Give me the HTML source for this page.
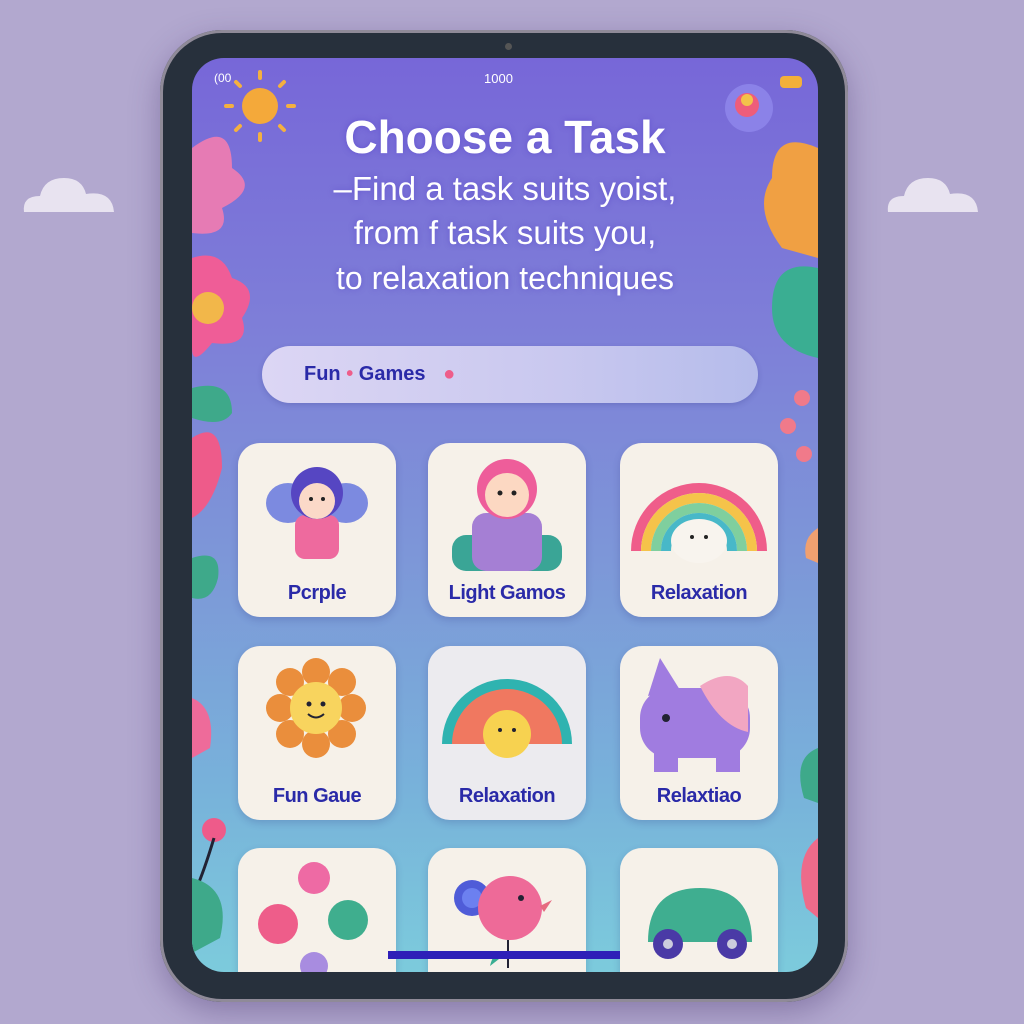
<!DOCTYPE html>
<html><head><meta charset="utf-8"><style>
*{margin:0;padding:0;box-sizing:border-box}
body{width:1024px;height:1024px;background:#b2a8cf;position:relative;overflow:hidden;font-family:"Liberation Sans",sans-serif}
.abs{position:absolute}
.dev{left:160px;top:30px;width:688px;height:972px;border-radius:62px;background:#27303c;box-shadow:0 0 0 3px #8f8a98 inset,0 10px 30px rgba(60,40,100,.35)}
.scr{left:192px;top:58px;width:626px;height:914px;border-radius:32px;overflow:hidden;background:linear-gradient(180deg,#7767d8 0%,#7e7fd8 30%,#7d97d8 55%,#78b2da 80%,#7ccbdc 100%)}
.t{color:#fff;text-align:center;width:100%;left:0;text-shadow:0 0 6px rgba(80,60,200,.5)}
.card{width:158px;height:174px;border-radius:22px;background:#f6f1e9;box-shadow:0 3px 8px rgba(40,40,120,.2)}
.lab{position:absolute;bottom:12px;width:100%;text-align:center;color:#2a2aa8;font-weight:bold;font-size:20px;letter-spacing:-.5px}
</style></head><body>
<svg class="abs" style="left:20px;top:160px" width="100" height="56"><path d="M4 52 Q2 36 20 36 Q24 18 44 18 Q62 18 66 34 Q92 30 94 52 Z" fill="#e8e3f0"/></svg>
<svg class="abs" style="left:884px;top:160px" width="100" height="56"><path d="M4 52 Q2 36 20 36 Q24 18 44 18 Q62 18 66 34 Q92 30 94 52 Z" fill="#e8e3f0"/></svg>
<div class="abs dev"></div>
<div class="abs" style="left:505px;top:43px;width:7px;height:7px;border-radius:50%;background:#555"></div>
<div class="abs scr">
<svg class="abs" style="left:0;top:0" width="626" height="914">
<!-- sun -->
<g transform="translate(68,48)"><circle r="18" fill="#f4a93a"/><g stroke="#f4b040" stroke-width="4" stroke-linecap="round"><path d="M0-28v-6M0 28v6M-28 0h-6M28 0h6M-20-20l-4-4M20-20l4-4M-20 20l-4 4M20 20l4 4"/></g></g>
<!-- left florals -->
<path d="M0 90 Q40 60 40 110 Q70 130 30 150 Q40 180 0 175Z" fill="#e67bb4"/>
<path d="M0 200 Q30 190 40 220 Q70 230 50 260 Q60 290 20 285 Q0 310 0 290Z" fill="#ef5d97"/>
<circle cx="16" cy="250" r="16" fill="#f2b74a"/>
<path d="M0 330 Q40 320 40 355 Q30 370 0 360Z" fill="#3ea98a"/>
<path d="M0 380 Q30 360 30 410 Q20 450 0 460Z" fill="#ee5b8a"/>
<path d="M0 500 Q30 490 26 520 Q20 545 0 540Z" fill="#3ea98a"/>
<path d="M0 640 Q24 650 18 690 L0 700Z" fill="#ee6b9a"/>
<circle cx="22" cy="772" r="12" fill="#ee5b8a"/>
<path d="M22 780 Q10 820 0 840" stroke="#223" stroke-width="3" fill="none"/>
<path d="M0 820 Q40 830 28 880 L0 895Z" fill="#3ea98a"/>
<!-- right florals -->
<path d="M626 90 Q580 70 580 120 Q560 150 590 190 L626 200Z" fill="#f0a043"/>
<path d="M626 210 Q580 200 580 250 Q580 290 626 300Z" fill="#3aae92"/>
<circle cx="610" cy="340" r="8" fill="#f07a8a"/><circle cx="596" cy="368" r="8" fill="#f07a8a"/><circle cx="612" cy="396" r="8" fill="#f07a8a"/>
<path d="M626 470 Q610 480 614 500 L626 505Z" fill="#f0a070"/>
<path d="M626 690 Q600 700 612 740 L626 745Z" fill="#3ea98a"/>
<path d="M626 780 Q600 800 614 850 L626 860Z" fill="#ee6b8a"/>
<!-- top right avatar -->
<circle cx="557" cy="50" r="24" fill="#8b82e8"/><circle cx="555" cy="47" r="12" fill="#ee5d7a"/><circle cx="555" cy="42" r="6" fill="#f3c24a"/>
<rect x="588" y="18" width="22" height="12" rx="4" fill="#f3b03a"/>
<!-- bottom bar -->
<rect x="196" y="893" width="232" height="8" fill="#2e1fb8"/>
</svg>
<div class="abs" style="left:22px;top:13px;color:#fff;font-size:12px">(00</div>
<div class="abs" style="left:292px;top:13px;color:#fff;font-size:13px">1000</div>
<div class="abs t" style="top:52px;font-size:46px;font-weight:bold">Choose a Task</div>
<div class="abs t" style="top:112px;font-size:33px">–Find a task suits yoist,</div>
<div class="abs t" style="top:156px;font-size:33px">from f task suits you,</div>
<div class="abs t" style="top:202px;font-size:32px">to relaxation techniques</div>
<div class="abs" style="left:70px;top:288px;width:496px;height:57px;border-radius:29px;background:linear-gradient(90deg,#dcd6f4,#c9c8ef 60%,#b5bceb);box-shadow:0 2px 6px rgba(40,40,120,.2)">
<span style="position:absolute;left:42px;top:17px;font-size:20px;font-weight:bold;color:#2a2aa8">Fun <span style="color:#ee5d8a">•</span> Games <span style="color:#ee5d8a;margin-left:12px">●</span></span></div>
<!-- cards -->
<div class="abs card" style="left:46px;top:385px"><svg width="158" height="130"><ellipse cx="50" cy="60" rx="22" ry="20" fill="#7c8ae0"/><ellipse cx="108" cy="60" rx="22" ry="20" fill="#7c8ae0"/><rect x="57" y="72" width="44" height="44" rx="10" fill="#ee6a9e"/><circle cx="79" cy="50" r="26" fill="#5646c2"/><circle cx="79" cy="58" r="18" fill="#fbd9c8"/><circle cx="73" cy="56" r="2" fill="#222"/><circle cx="85" cy="56" r="2" fill="#222"/></svg><div class="lab">Pcrple</div></div>
<div class="abs card" style="left:236px;top:385px"><svg width="158" height="130"><rect x="24" y="92" width="110" height="36" rx="14" fill="#3aa596"/><rect x="44" y="70" width="70" height="58" rx="14" fill="#a57fd4"/><circle cx="79" cy="46" r="30" fill="#ee5d9a"/><circle cx="79" cy="52" r="22" fill="#fcd8c2"/><circle cx="72" cy="50" r="2.5" fill="#222"/><circle cx="86" cy="50" r="2.5" fill="#222"/></svg><div class="lab">Light Gamos</div></div>
<div class="abs card" style="left:428px;top:385px"><svg width="158" height="130"><g fill="none" stroke-width="10"><path d="M16 108 A63 63 0 0 1 142 108" stroke="#ef5d8a"/><path d="M26 108 A53 53 0 0 1 132 108" stroke="#f5c34a"/><path d="M36 108 A43 43 0 0 1 122 108" stroke="#7fcf9e"/><path d="M46 108 A33 33 0 0 1 112 108" stroke="#48b8c8"/></g><ellipse cx="79" cy="98" rx="28" ry="22" fill="#f8f4ee"/><circle cx="72" cy="94" r="2" fill="#222"/><circle cx="86" cy="94" r="2" fill="#222"/></svg><div class="lab">Relaxation</div></div>
<div class="abs card" style="left:46px;top:588px"><svg width="158" height="130"><g fill="#ea8e3c" transform="translate(78,62)"><circle cx="0" cy="-36" r="14"/><circle cx="0" cy="36" r="14"/><circle cx="-36" cy="0" r="14"/><circle cx="36" cy="0" r="14"/><circle cx="-26" cy="-26" r="14"/><circle cx="26" cy="26" r="14"/><circle cx="-26" cy="26" r="14"/><circle cx="26" cy="-26" r="14"/></g><circle cx="78" cy="62" r="26" fill="#f8d45e"/><circle cx="71" cy="58" r="2.5" fill="#223"/><circle cx="85" cy="58" r="2.5" fill="#223"/><path d="M70 68 Q78 75 86 68" stroke="#223" stroke-width="2" fill="none"/></svg><div class="lab">Fun Gaue</div></div>
<div class="abs card" style="left:236px;top:588px;background:#ecebef"><svg width="158" height="130"><path d="M14 98 A65 65 0 0 1 144 98 Z" fill="#2fb3b0"/><path d="M24 98 A55 55 0 0 1 134 98 Z" fill="#f07860"/><circle cx="79" cy="88" r="24" fill="#f7d250"/><circle cx="72" cy="84" r="2" fill="#223"/><circle cx="86" cy="84" r="2" fill="#223"/></svg><div class="lab">Relaxation</div></div>
<div class="abs card" style="left:428px;top:588px"><svg width="158" height="130"><rect x="20" y="42" width="110" height="70" rx="30" fill="#a07ce0"/><rect x="34" y="90" width="24" height="36" fill="#a07ce0"/><rect x="96" y="90" width="24" height="36" fill="#a07ce0"/><path d="M28 50 L40 12 L60 44Z" fill="#a07ce0"/><path d="M80 40 Q110 20 128 40 L128 86 Q100 80 80 40Z" fill="#f2a6c2"/><circle cx="46" cy="72" r="4" fill="#223"/></svg><div class="lab">Relaxtiao</div></div>
<div class="abs card" style="left:46px;top:790px"><svg width="158" height="130"><circle cx="76" cy="30" r="16" fill="#ee6aa4"/><circle cx="40" cy="76" r="20" fill="#ee5d8a"/><circle cx="110" cy="72" r="20" fill="#3fae8e"/><circle cx="76" cy="118" r="14" fill="#a88ce0"/></svg></div>
<div class="abs card" style="left:236px;top:790px"><svg width="158" height="130"><circle cx="44" cy="50" r="18" fill="#4f5cd8"/><circle cx="44" cy="50" r="10" fill="#6c80f0"/><circle cx="82" cy="60" r="32" fill="#ee6a98"/><circle cx="93" cy="50" r="3" fill="#223"/><path d="M112 58 L124 52 L116 64Z" fill="#e66a80"/><path d="M62 118 Q66 100 80 104Z" fill="#3aae92"/><path d="M80 92 L80 120" stroke="#223" stroke-width="2"/></svg></div>
<div class="abs card" style="left:428px;top:790px"><svg width="158" height="130"><path d="M28 94 Q28 40 80 40 Q132 40 132 94Z" fill="#3fae90"/><circle cx="48" cy="96" r="15" fill="#4a3aa6"/><circle cx="48" cy="96" r="5" fill="#ccd"/><circle cx="112" cy="96" r="15" fill="#4a3aa6"/><circle cx="112" cy="96" r="5" fill="#ccd"/></svg></div>
<svg class="abs" style="left:0;top:0" width="626" height="914"><rect x="196" y="893" width="232" height="8" fill="#2e1fb8"/></svg>
</div>
</body></html>
